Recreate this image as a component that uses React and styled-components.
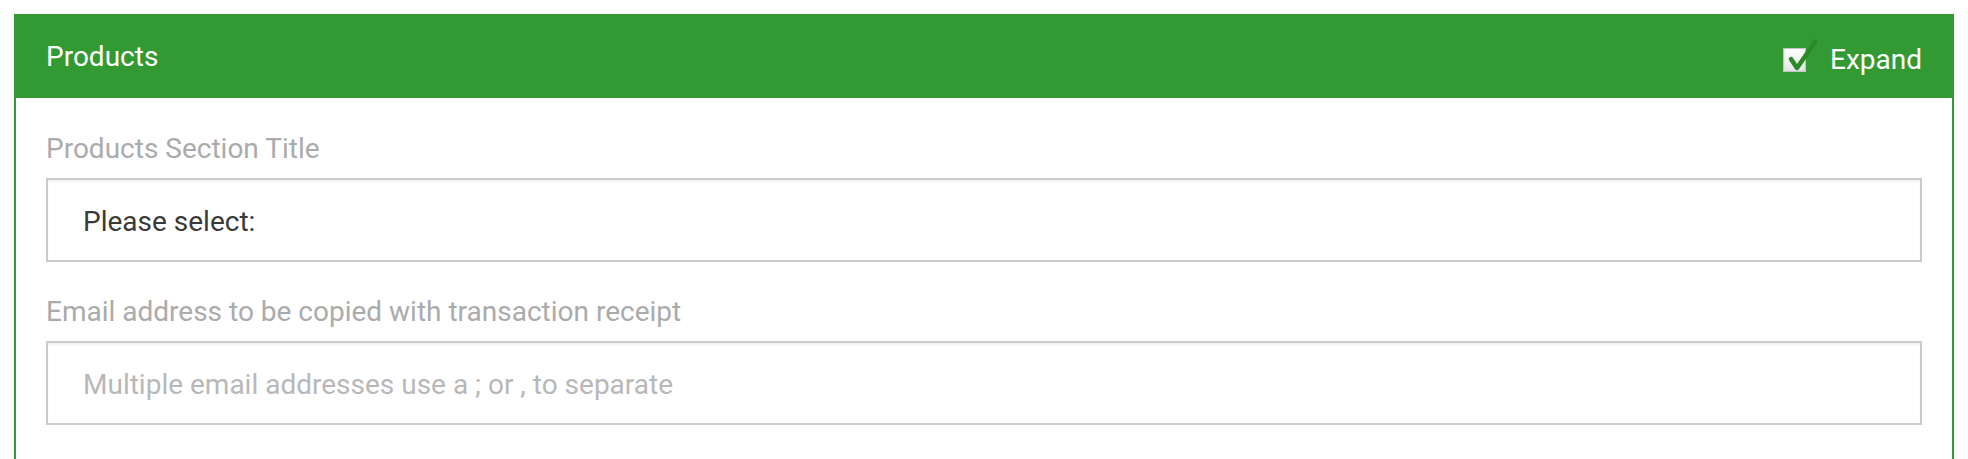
import React from "react";
import styled, { createGlobalStyle } from "styled-components";

const GlobalStyle = createGlobalStyle`
  html, body { margin: 0; padding: 0; background: #ffffff; }
  body { font-family: Roboto, "Liberation Sans", Arial, sans-serif; }
  * { box-sizing: border-box; }
`;

const Page = styled.div`
  padding: 14px 14px 0 14px;
`;

const Panel = styled.section`
  border: 2px solid #339933;
  border-top: 0;
  background: #ffffff;
  min-height: 460px;
`;

const Header = styled.header`
  height: 84px;
  background: #339933;
  display: flex;
  align-items: center;
  justify-content: space-between;
  margin: 0 -2px;
  padding: 2px 32px 0 32px;
`;

const Title = styled.h2`
  margin: 0;
  font-size: 28px;
  font-weight: 400;
  color: #ffffff;
  line-height: 1;
`;

const ExpandToggle = styled.label`
  display: flex;
  align-items: center;
  gap: 24px;
  font-size: 28px;
  color: #ffffff;
  line-height: 1;
  margin-top: 5px;
  cursor: pointer;
`;

const CheckBox = styled.span`
  position: relative;
  display: inline-block;
  width: 23px;
  height: 24px;
  border: 1px solid #c4c4c4;
  background: linear-gradient(180deg, #ffffff 0%, #e6e6e6 100%);
  box-shadow: inset 0 0 2px rgba(0,0,0,0.12);
`;

const CheckMark = styled.svg`
  position: absolute;
  left: 3px;
  top: -10px;
  width: 30px;
  height: 32px;
  overflow: visible;
`;

const Body = styled.div`
  padding: 31px 30px 0 30px;
`;

const Field = styled.div`
  display: flex;
  flex-direction: column;
  gap: 9px;
  margin-bottom: 30px;
`;

const FieldLabel = styled.label`
  font-size: 28px;
  line-height: 40px;
  color: #ababab;
`;

const InputBox = styled.div`
  height: 84px;
  border: 2px solid #cccccc;
  background: #ffffff;
  box-shadow: inset 0 2px 2px rgba(0,0,0,0.05);
  display: flex;
  align-items: center;
  padding: 2px 35px 0 35px;
  font-size: 28px;
  color: ${(p) => (p.$placeholder ? "#b8b8b8" : "#3a3a3a")};
`;

export default function App() {
  return (
    <>
      <GlobalStyle />
      <Page>
        <Panel>
          <Header>
            <Title>Products</Title>
            <ExpandToggle>
              <CheckBox>
                <CheckMark viewBox="0 0 30 32">
                  <path
                    d="M4 20 L10 29 L28 3"
                    fill="none"
                    stroke="#278a27"
                    strokeWidth="4.5"
                    strokeLinecap="round"
                    strokeLinejoin="round"
                  />
                </CheckMark>
              </CheckBox>
              Expand
            </ExpandToggle>
          </Header>
          <Body>
            <Field>
              <FieldLabel>Products Section Title</FieldLabel>
              <InputBox>Please select:</InputBox>
            </Field>
            <Field>
              <FieldLabel>Email address to be copied with transaction receipt</FieldLabel>
              <InputBox $placeholder>Multiple email addresses use a ; or , to separate</InputBox>
            </Field>
          </Body>
        </Panel>
      </Page>
    </>
  );
}
